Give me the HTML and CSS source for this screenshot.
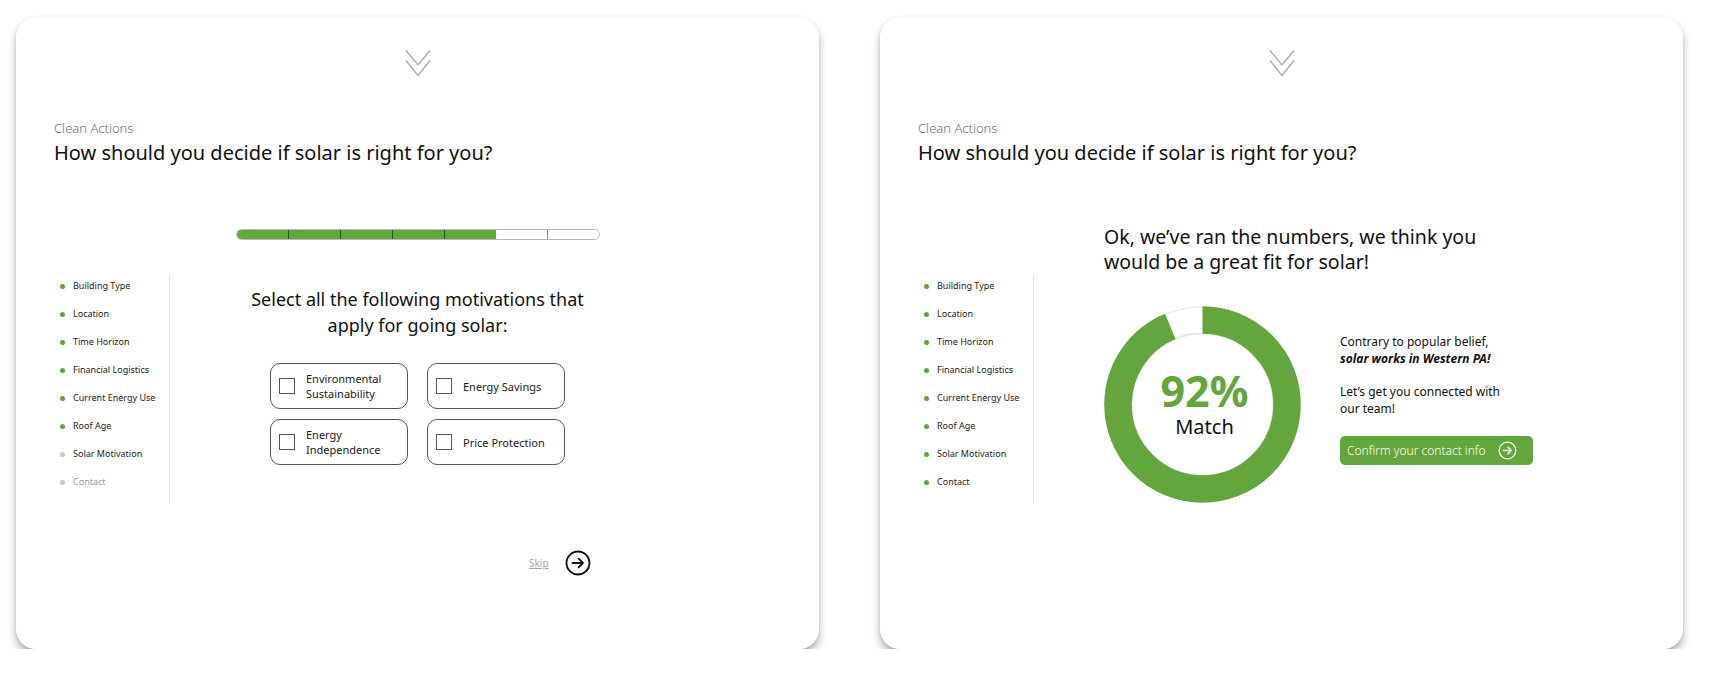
FILE: index.html
```html
<!DOCTYPE html>
<html lang="en">
<head>
<meta charset="utf-8">
<title>Clean Actions – Solar</title>
<link rel="stylesheet" href="styles.css">
</head>
<body>
<div class="page">
  <section class="card">
    <svg class="chev" viewBox="0 0 26 26" width="26" height="26"><path d="M1 0.5 L13 15 L25 0.5 M1 10.5 L13 25.5 L25 10.5" fill="none" stroke="#a9a9a9" stroke-width="1.3"/></svg>
    <header class="head">
      <p class="brand">Clean Actions</p>
      <h1 class="title">How should you decide if solar is right for you?</h1>
    </header>
    <div class="progress">
      <span class="seg on"></span><span class="seg on"></span><span class="seg on"></span><span class="seg on"></span><span class="seg on"></span><span class="seg off"></span><span class="seg off"></span>
    </div>
    <div class="row row-quiz">
      <ul class="steps">
        <li class="step"><span class="dot"></span>Building Type</li>
        <li class="step"><span class="dot"></span>Location</li>
        <li class="step"><span class="dot"></span>Time Horizon</li>
        <li class="step"><span class="dot"></span>Financial Logistics</li>
        <li class="step"><span class="dot"></span>Current Energy Use</li>
        <li class="step"><span class="dot"></span>Roof Age</li>
        <li class="step current"><span class="dot"></span>Solar Motivation</li>
        <li class="step todo"><span class="dot"></span>Contact</li>
      </ul>
      <div class="quiz">
        <h2 class="question">Select all the following motivations that apply for going solar:</h2>
        <div class="opts">
          <label class="opt"><span class="box"></span><span>Environmental<br>Sustainability</span></label>
          <label class="opt"><span class="box"></span><span>Energy Savings</span></label>
          <label class="opt"><span class="box"></span><span>Energy<br>Independence</span></label>
          <label class="opt"><span class="box"></span><span>Price Protection</span></label>
        </div>
      </div>
    </div>
    <div class="foot">
      <a class="skip">Skip</a>
      <svg class="next" viewBox="0 0 26 26" width="26" height="26"><circle cx="13" cy="13" r="11.5" fill="none" stroke="#111" stroke-width="1.8"/><path d="M7.5 13 H18 M13.6 8.6 L18 13 L13.6 17.4" fill="none" stroke="#111" stroke-width="1.8" stroke-linecap="round" stroke-linejoin="round"/></svg>
    </div>
  </section>

  <section class="card">
    <svg class="chev" viewBox="0 0 26 26" width="26" height="26"><path d="M1 0.5 L13 15 L25 0.5 M1 10.5 L13 25.5 L25 10.5" fill="none" stroke="#a9a9a9" stroke-width="1.3"/></svg>
    <header class="head">
      <p class="brand">Clean Actions</p>
      <h1 class="title">How should you decide if solar is right for you?</h1>
    </header>
    <h2 class="result-h">Ok, we’ve ran the numbers, we think you would be a great fit for solar!</h2>
    <div class="row row-result">
      <ul class="steps">
        <li class="step"><span class="dot"></span>Building Type</li>
        <li class="step"><span class="dot"></span>Location</li>
        <li class="step"><span class="dot"></span>Time Horizon</li>
        <li class="step"><span class="dot"></span>Financial Logistics</li>
        <li class="step"><span class="dot"></span>Current Energy Use</li>
        <li class="step"><span class="dot"></span>Roof Age</li>
        <li class="step"><span class="dot"></span>Solar Motivation</li>
        <li class="step"><span class="dot"></span>Contact</li>
      </ul>
      <div class="result">
        <div class="donut">
          <svg viewBox="0 0 197 197" width="197" height="197">
            <circle cx="98.5" cy="98.5" r="97.5" fill="none" stroke="#e4e4e4" stroke-width="1"/>
            <circle cx="98.5" cy="98.5" r="71" fill="none" stroke="#e6e6e6" stroke-width="2"/>
            <circle cx="98.5" cy="98.5" r="84.5" fill="none" stroke="#63a63d" stroke-width="27.5" stroke-dasharray="497 540" transform="rotate(-90 98.5 98.5)"/>
          </svg>
          <div class="score">
            <span class="pct">92%</span>
            <span class="match">Match</span>
          </div>
        </div>
        <div class="aside">
          <p>Contrary to popular belief,<br><strong><em>solar works in Western PA!</em></strong></p>
          <p>Let’s get you connected with<br>our team!</p>
          <a class="cta">Confirm your contact info
            <svg viewBox="0 0 20 20" width="19" height="19"><circle cx="10" cy="10" r="8.8" fill="none" stroke="#fff" stroke-width="1.3"/><path d="M5.8 10 H14 M10.6 6.6 L14 10 L10.6 13.4" fill="none" stroke="#fff" stroke-width="1.5" stroke-linecap="round" stroke-linejoin="round"/></svg>
          </a>
        </div>
      </div>
    </div>
  </section>
</div>
</body>
</html>
```

FILE: styles.css
```css
* { box-sizing: border-box; }

body {
  margin: 0;
  background: #fff;
  font-family: "Noto Sans", "Open Sans", sans-serif;
  color: #1b1b1b;
}

.page {
  display: flex;
  gap: 61px;
  padding: 17px 0 0 16px;
}

.card {
  width: 803px;
  height: 632px;
  flex: none;
  background: #fff;
  border-radius: 20px;
  box-shadow: 0 6px 8px rgba(0, 0, 0, 0.3), 0 0 3px rgba(0, 0, 0, 0.08);
  display: flex;
  flex-direction: column;
  padding-top: 33px;
}

.chev {
  display: block;
  align-self: center;
  width: 26px;
  height: 26px;
}

.head {
  padding-left: 38px;
  margin-top: 43px;
}

.brand {
  margin: 0;
  font-size: 13px;
  line-height: 18px;
  font-weight: 300;
  color: #707070;
}

.title {
  margin: 3px 0 0;
  font-size: 20px;
  line-height: 26px;
  font-weight: 400;
  color: #111;
}

/* progress */
.progress {
  align-self: center;
  display: flex;
  width: 364px;
  height: 11px;
  margin-top: 63px;
  border: 1px solid #b7b7b7;
  border-radius: 6px;
  overflow: hidden;
}

.seg {
  flex: 1;
  background: #fff;
}

.seg.on { background: #63a63d; }
.seg + .seg { border-left: 1px solid #8c8c8c; }
.seg.on + .seg.on { border-left-color: #2f4f22; }
.seg.on + .seg.off { border-left: 0; }

/* rows */
.row {
  display: grid;
  height: 229px;
}

.row-quiz {
  grid-template-columns: 154px 1fr 154px;
  margin-top: 35px;
}

.row-result {
  grid-template-columns: 154px 1fr;
  margin-top: 1px;
}

.steps {
  list-style: none;
  margin: 0;
  padding: 3px 0 0 44px;
  border-right: 1px solid #e3e3e3;
  display: flex;
  flex-direction: column;
  gap: 12px;
}

.step {
  display: flex;
  align-items: center;
  gap: 8px;
  font-size: 9px;
  line-height: 16px;
  color: #1b1b1b;
}

.dot {
  width: 5px;
  height: 5px;
  border-radius: 50%;
  background: #63a63d;
  flex: none;
}

.step.current .dot,
.step.todo .dot { background: #c8c8c8; }
.step.todo { color: #9a9a9a; }

/* quiz */
.quiz {
  display: flex;
  flex-direction: column;
  align-items: center;
  padding-top: 11px;
}

.question {
  margin: 0;
  max-width: 350px;
  font-size: 18px;
  line-height: 26px;
  font-weight: 400;
  text-align: center;
  color: #111;
}

.opts {
  margin-top: 25px;
  display: grid;
  grid-template-columns: 138px 138px;
  gap: 10px 19px;
}

.opt {
  height: 46px;
  border: 1px solid #555;
  border-radius: 10px;
  display: flex;
  align-items: center;
  gap: 11px;
  padding-left: 8px;
  font-size: 11px;
  line-height: 15px;
  color: #1b1b1b;
}

.box {
  width: 16px;
  height: 16px;
  border: 1px solid #555;
  flex: none;
}

.foot {
  display: flex;
  align-items: center;
  gap: 16px;
  margin-top: 46px;
  padding-left: 513px;
}

.skip {
  font-size: 10px;
  color: #a8a8a8;
  text-decoration: underline;
}

.next { display: block; }

/* result */
.result-h {
  margin: 58px 0 0 224px;
  max-width: 390px;
  font-size: 19.5px;
  line-height: 25px;
  font-weight: 400;
  color: #111;
}

.result {
  display: flex;
  align-items: flex-start;
  gap: 39px;
  padding: 31px 0 0 70px;
}

.donut {
  display: grid;
  width: 197px;
  height: 197px;
  flex: none;
}

.donut > svg,
.donut > .score {
  grid-area: 1 / 1;
}

.donut > svg { display: block; }

.score {
  display: flex;
  flex-direction: column;
  align-items: center;
  justify-content: center;
  padding-left: 4px;
}

.pct {
  font-size: 43px;
  line-height: 44px;
  font-weight: 700;
  color: #63a63d;
}

.match {
  font-size: 20px;
  line-height: 28px;
  color: #111;
}

.aside {
  margin-top: 27px;
  display: flex;
  flex-direction: column;
  align-items: flex-start;
}

.aside p {
  margin: 0;
  font-size: 12px;
  line-height: 17px;
  color: #111;
}

.aside p + p { margin-top: 16px; }

.cta {
  margin-top: 19px;
  width: 193px;
  height: 29px;
  display: flex;
  align-items: center;
  justify-content: space-between;
  padding: 0 16px 0 7px;
  background: #63a63d;
  border-radius: 5px;
  color: #fff;
  font-size: 12px;
  font-weight: 300;
}

.cta svg { display: block; flex: none; }
```
